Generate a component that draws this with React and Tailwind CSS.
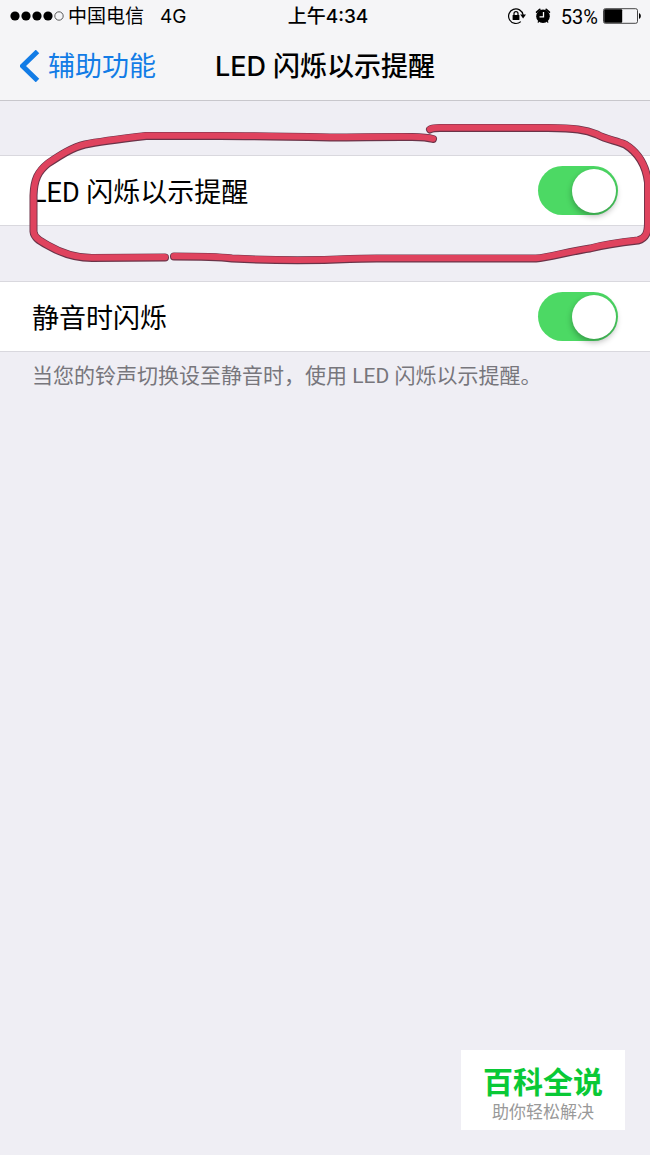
import React, { useState } from 'react';

function SignalDots() {
  return (
    <svg className="h-3 w-14 shrink-0" viewBox="0 0 56 12" role="img" aria-label="信号强度">
      <circle cx="5" cy="6" r="4.6" />
      <circle cx="16" cy="6" r="4.6" />
      <circle cx="27" cy="6" r="4.6" />
      <circle cx="38" cy="6" r="4.6" />
      <circle cx="49" cy="6" r="4.2" fill="none" stroke="#333" strokeWidth="0.8" />
    </svg>
  );
}

function RotationLock() {
  return (
    <svg className="h-5 w-5" viewBox="0 0 20 20" aria-hidden="true">
      <path d="M13.8 15.6A7.3 7.3 0 1 1 16.1 9" fill="none" stroke="#000" strokeWidth="1.2" />
      <path d="M13.2 8.6h5.8l-2.9 3.8z" />
      <rect x="5.6" y="9" width="6.8" height="5" rx="0.6" />
      <path d="M7 9.3V7.6a2 2 0 0 1 4 0V9.3" fill="none" stroke="#000" strokeWidth="1.2" />
    </svg>
  );
}

function AlarmIcon() {
  return (
    <svg className="h-5 w-4" viewBox="0 0 16 20" aria-hidden="true">
      <circle cx="8" cy="10.2" r="6.8" />
      <path d="M1.6 6.2 4.8 3.4M14.4 6.2 11.2 3.4" stroke="#000" strokeWidth="1.7" strokeLinecap="round" />
      <path d="m4 15-.8 1.200M12 15l.8 1.200" stroke="#000" strokeWidth="1.200" strokeLinecap="round" />
      <path d="M8.500 6v4.900H4.500" fill="none" stroke="#fff" strokeWidth="1.300" />
    </svg>
  );
}

function Battery() {
  return (
    <svg className="h-4 w-10" viewBox="0 0 40 16" role="img" aria-label="电池电量">
      <rect x="1.5" y="0.7" width="34" height="14.6" rx="1.8" fill="none" stroke="#333" strokeWidth="0.9" />
      <rect x="2.2" y="1.3" width="18" height="13.4" rx="1" />
      <path d="M37 5.2c2.4.5 2.4 5.1 0 5.6z" />
    </svg>
  );
}

function StatusBar() {
  return (
    <div className="grid h-8 grid-cols-[1fr_auto_1fr] items-center pl-2.5 pr-2 text-[19px] leading-7">
      <div className="flex items-center gap-0.5">
        <SignalDots />
        <span className="pt-0.5">中国电信</span>
        <span className="ml-3.5 pt-0.5">4G</span>
      </div>
      <time className="pl-1 pt-0.5 font-medium">上午4:34</time>
      <div className="flex items-center justify-end">
        <RotationLock />
        <span className="ml-2 flex">
          <AlarmIcon />
        </span>
        <span className="ml-2.5 mr-1 pt-0.5 font-['Roboto',sans-serif] text-xl leading-7">53%</span>
        <Battery />
      </div>
    </div>
  );
}

function SettingRow({ id, label }) {
  const [on, setOn] = useState(true);
  return (
    <div className="flex items-center justify-between border-y border-[#d9d8de] bg-white px-8 py-2.5">
      <label htmlFor={id} className="pt-1.5 font-['Roboto','Noto_Sans_CJK_SC',sans-serif] text-[27px] leading-[43px]">
        {label}
      </label>
      <input
        id={id}
        type="checkbox"
        role="switch"
        checked={on}
        onChange={(e) => setOn(e.target.checked)}
        className="flex h-[49px] w-20 shrink-0 cursor-pointer appearance-none items-center rounded-full bg-[#e5e5ea] px-0.5 before:size-11 before:rounded-full before:bg-white before:shadow-[0_3px_6px_rgba(0,0,0,0.3)] checked:justify-end checked:bg-[#4cd964]"
      />
    </div>
  );
}

const STROKES = [
  'M433 138.5C422 135.5 400 136.5 330 137C280 136 250 135.5 220 135.5L146 135.5C125 138 100 141 85 144C72 147 60 155 48 163C38 171 34 179 33.5 195L33.5 231C34 237 39 240 48 245C60 252 75 257.5 92 257.5L165 257',
  'M174 256C195 256 215 256 232 258C270 260 320 260 350 258.5C365 257.5 380 258 400 258L536 258C550 257 568 251 590 248C605 244 620 242 638 240C646 238 648 232 648 222L648 182C646 165 638 152 625 144C615 140 606 139 597 134C585 129 575 128 548 127.5L440 127.5C434 127.5 432 128 430 129',
];

function MarkerRing() {
  return (
    <svg
      className="pointer-events-none absolute inset-x-0 -top-10 h-[150px] w-full"
      viewBox="0 115 650 150"
      preserveAspectRatio="none"
      fill="none"
      strokeLinecap="round"
      strokeLinejoin="round"
      aria-hidden="true"
    >
      {STROKES.map((d) => (
        <g key={d}>
          <path d={d} stroke="#6b3348" strokeWidth="8" transform="translate(0 0.5)" />
          <path d={d} stroke="#df435e" strokeWidth="6.2" transform="translate(0 0.2)" />
        </g>
      ))}
    </svg>
  );
}

export default function App() {
  return (
    <div className="flex min-h-screen flex-col overflow-x-hidden bg-[#efeef4] font-['Inter','Noto_Sans_CJK_SC',sans-serif] text-black">
      <header className="border-b border-[#c8c7cc] bg-[#f5f5f7]">
        <StatusBar />
        <nav className="grid h-[68px] grid-cols-[1fr_auto_1fr] items-center px-5 text-[27px] leading-9">
          <a href="#accessibility" className="flex items-center gap-2 text-[#127ce6]">
            <svg className="h-8 w-5" viewBox="0 0 20 32" fill="none" aria-hidden="true">
              <path d="M17.5 1.5 2.5 16 17.5 30.5" stroke="currentColor" strokeWidth="5" />
            </svg>
            <span className="pt-0.5">辅助功能</span>
          </a>
          <h1 className="pt-0.5 font-medium">LED 闪烁以示提醒</h1>
        </nav>
      </header>

      <main className="flex flex-col gap-[55px] pt-[54px]">
        <section className="relative">
          <SettingRow id="led-flash" label="LED 闪烁以示提醒" />
          <MarkerRing />
        </section>
        <section>
          <SettingRow id="silent-flash" label="静音时闪烁" />
          <p className="px-8 pt-2 font-['Roboto','Noto_Sans_CJK_SC',sans-serif] text-[21px] leading-8 text-[#77767c]">
            当您的铃声切换设至静音时，使用 LED 闪烁以示提醒。
          </p>
        </section>
      </main>

      <footer className="mb-[25px] mr-[25px] mt-auto self-end bg-white px-[22px] pb-2 pt-3 text-center">
        <p className="text-[30px] font-bold leading-10 text-[#09c936]">百科全说</p>
        <p className="text-[17px] leading-5 text-[#999]">助你轻松解决</p>
      </footer>
    </div>
  );
}
